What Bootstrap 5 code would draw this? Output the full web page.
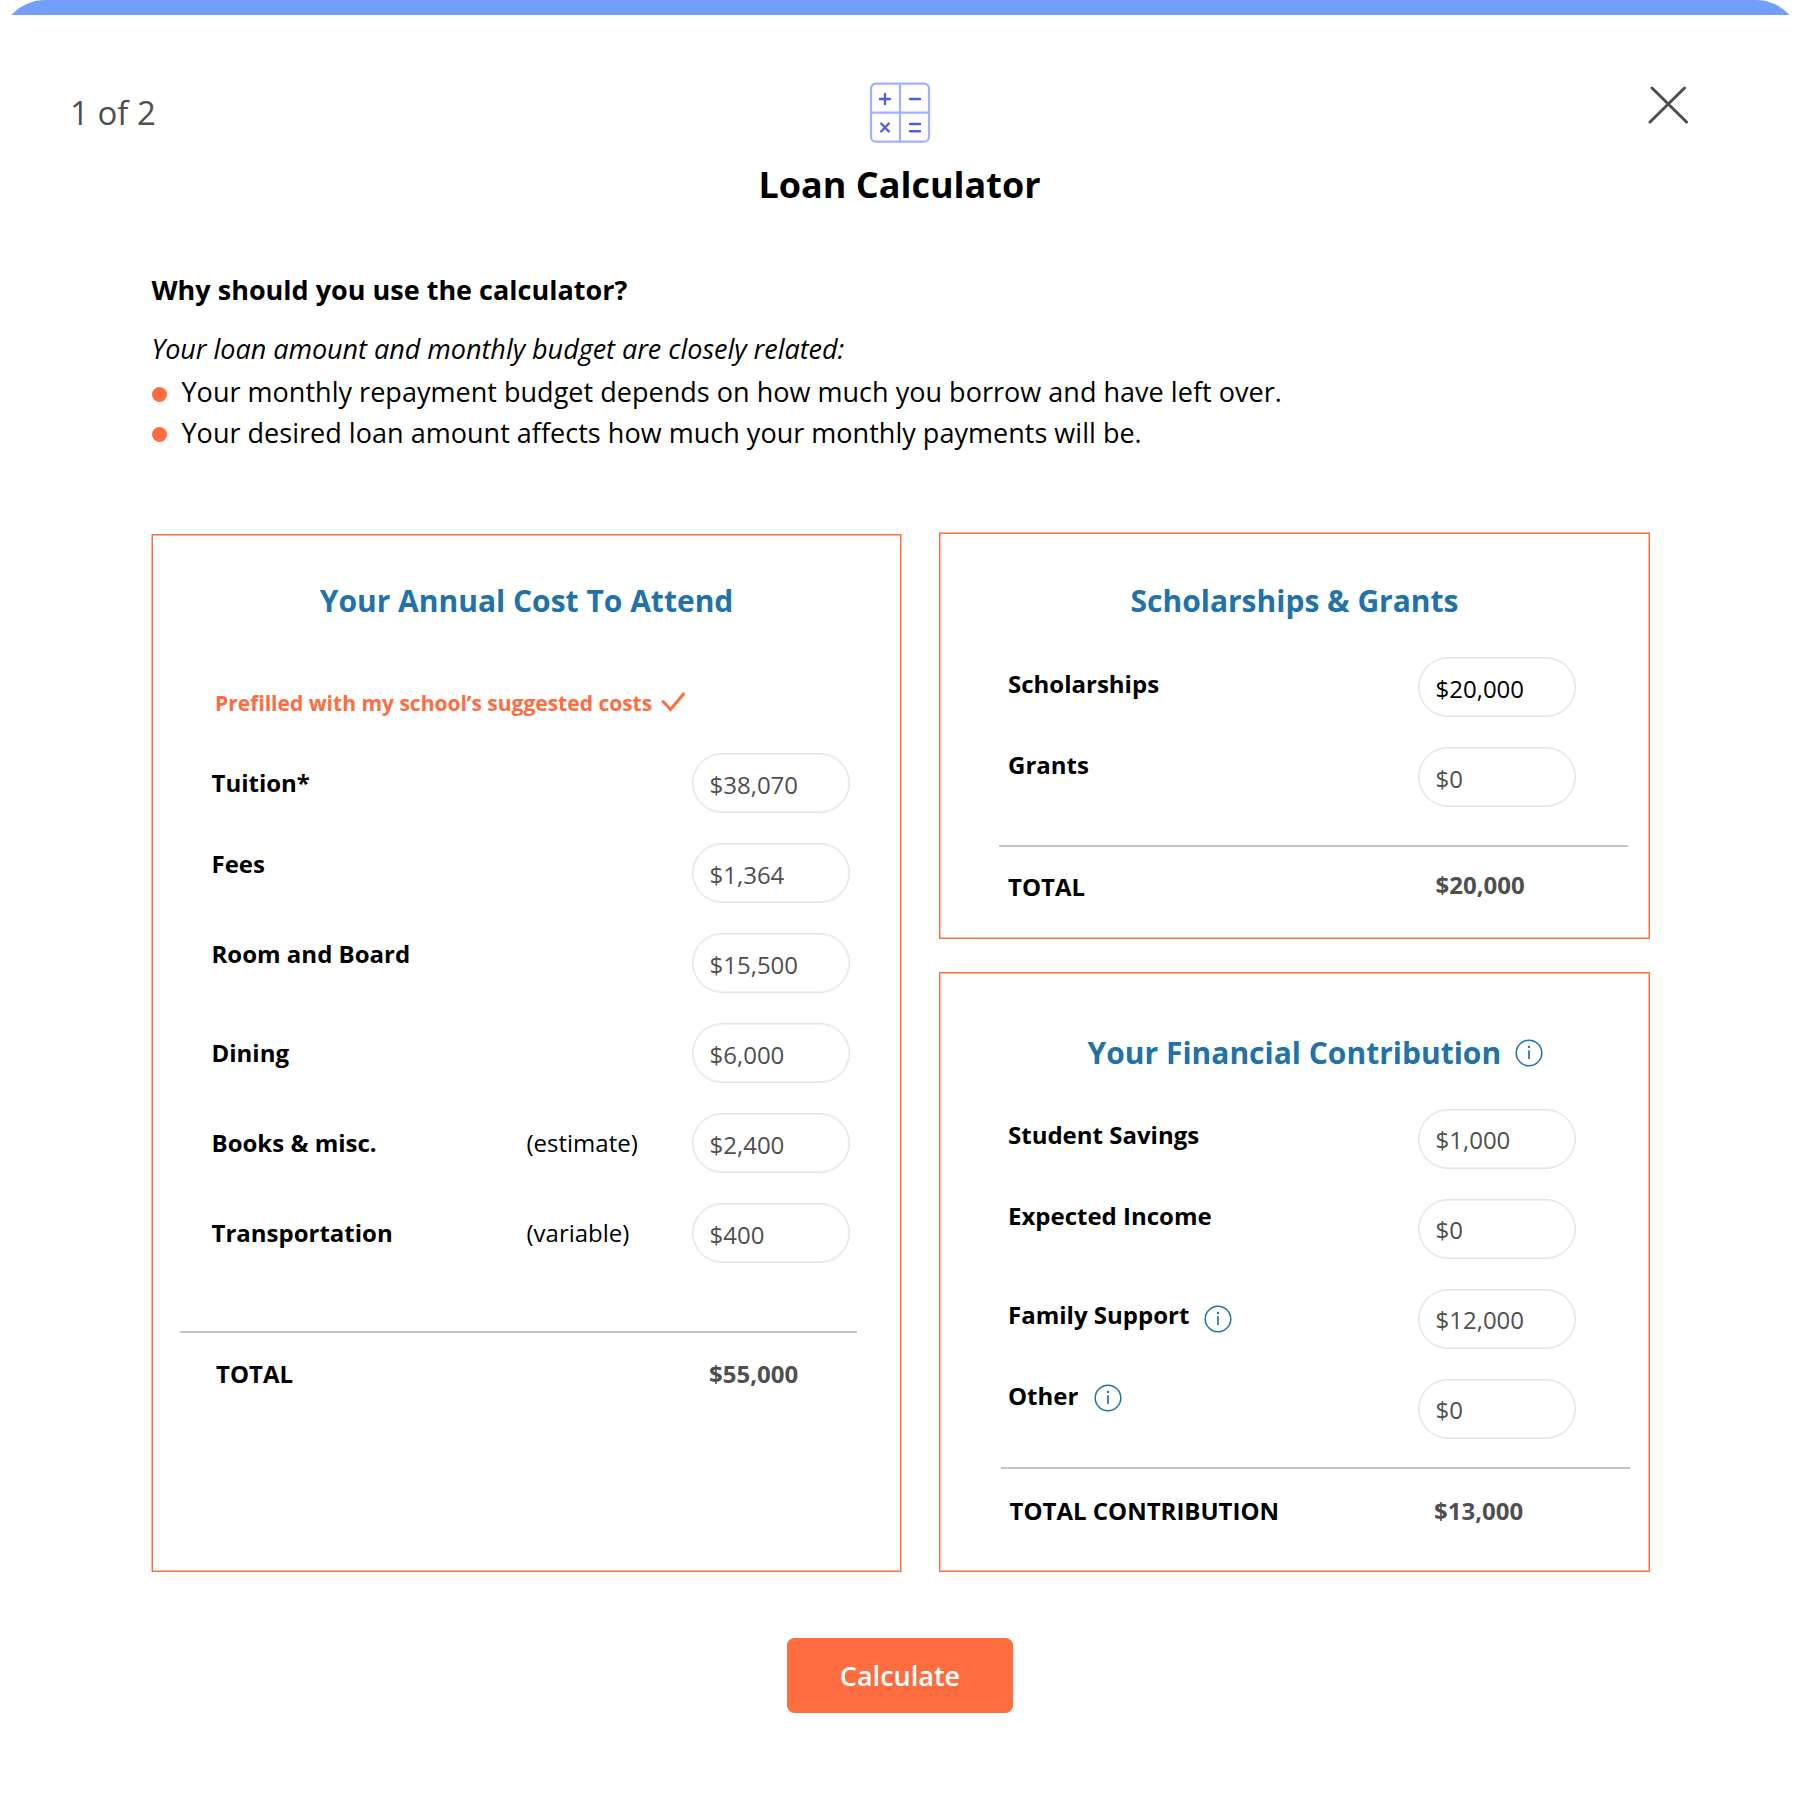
<!DOCTYPE html>
<html lang="en">
<head>
<meta charset="utf-8">
<meta name="viewport" content="width=device-width, initial-scale=1">
<title>Loan Calculator</title>
<link href="https://cdn.jsdelivr.net/npm/bootstrap@5.3.0/dist/css/bootstrap.min.css" rel="stylesheet">
<style>
  :root { --coral: #ff6c40; --coral-soft: rgba(255,108,64,.5); --blue: #2272a9; --ink: #4f4f4f; }
  body { font-family: "Open Sans", sans-serif; font-size: 24px; line-height: 36px; color: #000; background: #fff; }
  .page { width: 1801px; height: 1801px; overflow: hidden; }
  .top-strip { height: 15px; overflow: hidden; }
  .top-strip div { height: 90px; border-radius: 45px; background: #719ffb; }
  .page-head { display: grid; grid-template-columns: 1fr auto 1fr; padding: 67px 113.5px 0 70px; height: 233px; }
  .step { font-size: 33px; line-height: 45px; color: var(--ink); padding-top: 8px; }
  .head-mid { margin-left: 42px; }
  .title { font-size: 36px; line-height: 48px; font-weight: 700; margin: 17px .5px 0 0; }
  .close-x { border: 0; background: none; padding: 3px 0 0; }
  .intro { padding: 22px 0 0 151.5px; height: 284px; font-size: 27px; }
  .intro h2 { font-size: 27px; line-height: 39px; font-weight: 700; margin: 0 0 20px; }
  .intro p { line-height: 39px; margin: 0 0 4px; letter-spacing: -.03px; }
  .intro li { line-height: 40.5px; gap: 15px; letter-spacing: .026px; }
  .dot { width: 15px; height: 15px; border-radius: 50%; background: var(--coral); margin-top: 4px; }
  .panels { padding-left: 152px; align-items: flex-start; gap: 38px; height: 1040px; }
  .panel { border: 1px solid var(--coral); }
  .panel-cost { width: 749px; height: 1038px; margin-top: 2px; padding: 46px 50.5px 0 58.5px;
    box-shadow: -1px 0 var(--coral-soft), 1px 0 var(--coral-soft), inset 0 1px var(--coral-soft), inset 0 -1px var(--coral-soft); }
  .panel-grants { width: 711px; height: 406px; margin-top: 1px; padding: 47px 73px 0 68px;
    box-shadow: 0 -1px var(--coral-soft), inset 1px 0 var(--coral-soft), inset -1px 0 var(--coral-soft), inset 0 -1px var(--coral-soft); }
  .panel-contrib { width: 711px; height: 600px; margin-top: 33px; padding: 60px 73px 0 68px; box-shadow: inset 0 0 0 1px var(--coral-soft); }
  .panel h3 { font-size: 30px; line-height: 40px; font-weight: 700; color: var(--blue); margin: 0; }
  .panel-cost h3 { margin-right: 8px; }
  .panel-grants h3 { margin-left: 5px; }
  .panel-contrib h3 { padding-left: 79.5px; gap: 14px; }
  .prefilled { font-size: 21px; line-height: 30px; font-weight: 700; color: var(--coral); padding-left: 3.5px; margin: 67px 0 20px; }
  .prefilled svg { margin: 0 0 2px 7.5px; }
  .field { height: 90px; display: flex; align-items: center; }
  .field-name { font-weight: 700; width: 315px; white-space: nowrap; display: flex; align-items: center; }
  .up-sm { padding-bottom: 6px; }
  .up-md { padding-bottom: 18px; }
  .up-lg { padding-bottom: 24px; }
  .panel-contrib .up-sm { padding-bottom: 8px; }
  .panel-contrib .up-lg { padding-bottom: 26px; }
  .amount { width: 158px; height: 60px; margin-left: auto; border: 1px solid #e2e2e2; box-shadow: inset 0 0 0 1px rgba(226,226,226,.45);
    border-radius: 30px; padding: 13px 0 0 17px; font-size: 24px; line-height: 36px; color: var(--ink); background: #fff; font-family: inherit; }
  .panel-grants .amount { padding-left: 16.5px; }
  .panel-contrib .amount { padding: 12px 0 0 16.5px; }
  .right-rows { padding-top: 21px; }
  .tip-family { margin: 7px 0 0 14.5px; }
  .tip-other { margin: 3px 0 0 16px; }
  .rule { border: 0; height: 2px; background: #c4c4c4; opacity: 1; }
  .sum { display: flex; font-weight: 700; }
  .sum span:last-child { margin-left: auto; width: 140.5px; color: var(--ink); }
  .panel-cost .rule { width: 677.5px; margin: 53px 0 0 -32px; }
  .panel-cost .sum { margin-top: 23px; padding-left: 4.5px; }
  .panel-grants .rule { width: 629px; margin: 23px 0 0 -9.5px; }
  .panel-grants .sum { margin-top: 20px; }
  .panel-grants .sum span:first-child { padding-top: 2px; }
  .panel-contrib .rule { width: 629px; margin: 13px 0 0 -7px; }
  .panel-contrib .sum { margin: 24px 1.5px 0 1.5px; }
  .btn-calc { width: 226px; height: 75px; border: 0; border-radius: 7.5px; background: var(--coral); color: #fff; font-size: 27px; font-weight: 600; margin-left: 787px; margin-top: 66px; padding-top: 8px; }
</style>
</head>
<body>
<svg width="0" height="0" class="position-absolute">
  <symbol id="info" viewBox="0 0 28 28">
    <circle cx="14" cy="14" r="12.8" fill="none" stroke="#2272a9" stroke-width="1.5"/>
    <path d="M14 11.2V20" stroke="#2272a9" stroke-width="1.7"/>
    <circle cx="14" cy="7.9" r="1.2" fill="#2272a9"/>
  </symbol>
</svg>
<div class="page">
  <div class="top-strip"><div></div></div>

  <header class="page-head">
    <div class="step">1 of 2</div>
    <div class="head-mid text-center">
      <svg class="d-block mx-auto" width="62" height="62" viewBox="0 0 62 62" fill="none">
        <g stroke="#a2b1ff" stroke-width="2.25">
          <rect x="2" y="1.7" width="58" height="58" rx="5"/>
          <path d="M31 2v57.500M2 30.500h58"/>
        </g>
        <path stroke="#4a5fe6" stroke-width="2.4" stroke-linecap="round" d="M11 17h10M16 12v10M41 17h10M12.200 41.500l7.600 8M19.800 41.500l-7.600 8M41 42h10M41 49.300h10"/>
      </svg>
      <h1 class="title">Loan Calculator</h1>
    </div>
    <button class="close-x d-flex justify-content-end align-items-start" type="button" aria-label="Close">
      <svg width="40" height="40" viewBox="0 0 40 40"><path d="M4 3L38.500 37M36.500 3L2 37" stroke="#4f4f4f" stroke-width="3" stroke-linecap="round"/></svg>
    </button>
  </header>

  <section class="intro">
    <h2>Why should you use the calculator?</h2>
    <p class="fst-italic">Your loan amount and monthly budget are closely related:</p>
    <ul class="list-unstyled m-0">
      <li class="d-flex align-items-center"><span class="dot"></span>Your monthly repayment budget depends on how much you borrow and have left over.</li>
      <li class="d-flex align-items-center"><span class="dot"></span>Your desired loan amount affects how much your monthly payments will be.</li>
    </ul>
  </section>

  <main class="panels d-flex">
    <section class="panel panel-cost">
      <h3 class="text-center">Your Annual Cost To Attend</h3>
      <p class="prefilled d-flex align-items-center">Prefilled with my school’s suggested costs
        <svg width="26" height="22" viewBox="0 0 26 22" fill="none"><path d="M3 10.500L10.500 18.500L23.500 3" stroke="#ff6c40" stroke-width="3" stroke-linecap="round"/></svg></p>
      <div class="field"><span class="field-name">Tuition*</span><div class="amount form-control">$38,070</div></div>
      <div class="field"><span class="field-name up-md">Fees</span><div class="amount form-control">$1,364</div></div>
      <div class="field"><span class="field-name up-md">Room and Board</span><div class="amount form-control">$15,500</div></div>
      <div class="field"><span class="field-name">Dining</span><div class="amount form-control">$6,000</div></div>
      <div class="field"><span class="field-name">Books &amp; misc.</span><span>(estimate)</span><div class="amount form-control">$2,400</div></div>
      <div class="field"><span class="field-name">Transportation</span><span>(variable)</span><div class="amount form-control">$400</div></div>
      <hr class="rule">
      <div class="sum"><span>TOTAL</span><span>$55,000</span></div>
    </section>

    <div class="d-flex flex-column">
      <section class="panel panel-grants">
        <h3 class="text-center">Scholarships &amp; Grants</h3>
        <div class="right-rows">
          <div class="field"><span class="field-name up-sm">Scholarships</span><div class="amount form-control text-black">$20,000</div></div>
          <div class="field"><span class="field-name up-lg">Grants</span><div class="amount form-control">$0</div></div>
        </div>
        <hr class="rule">
        <div class="sum"><span>TOTAL</span><span>$20,000</span></div>
      </section>

      <section class="panel panel-contrib">
        <h3 class="d-flex align-items-center">Your Financial Contribution
          <svg width="28" height="28"><use href="#info"/></svg></h3>
        <div class="right-rows">
          <div class="field"><span class="field-name up-sm">Student Savings</span><div class="amount form-control">$1,000</div></div>
          <div class="field"><span class="field-name up-lg">Expected Income</span><div class="amount form-control">$0</div></div>
          <div class="field"><span class="field-name up-sm">Family Support<svg class="tip-family" width="28" height="28"><use href="#info"/></svg></span><div class="amount form-control">$12,000</div></div>
          <div class="field"><span class="field-name up-lg">Other<svg class="tip-other" width="28" height="28"><use href="#info"/></svg></span><div class="amount form-control">$0</div></div>
        </div>
        <hr class="rule">
        <div class="sum"><span>TOTAL CONTRIBUTION</span><span>$13,000</span></div>
      </section>
    </div>
  </main>

  <button class="btn btn-calc" type="button">Calculate</button>
</div>
<script src="https://cdn.jsdelivr.net/npm/bootstrap@5.3.0/dist/js/bootstrap.bundle.min.js"></script>
</body>
</html>
